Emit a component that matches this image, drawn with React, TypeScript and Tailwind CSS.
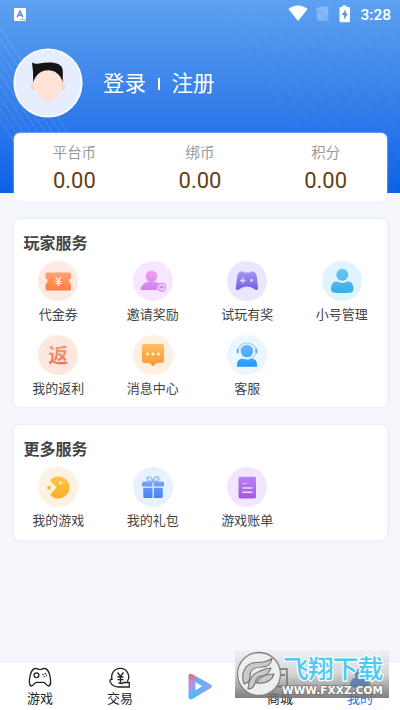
import type { ReactNode } from 'react';

const balances = [
  { label: '平台币', value: '0.00' },
  { label: '绑币', value: '0.00' },
  { label: '积分', value: '0.00' },
];

type Service = { label: string; bg: string; icon: ReactNode };

const playerServices: Service[] = [
  { label: '代金券', bg: 'bg-[#ffe9e4]', icon: <VoucherIcon /> },
  { label: '邀请奖励', bg: 'bg-[#f7e6ff]', icon: <InviteIcon /> },
  { label: '试玩有奖', bg: 'bg-[#e9e7fd]', icon: <GamepadIcon /> },
  { label: '小号管理', bg: 'bg-[#e0f4ff]', icon: <UserIcon /> },
  { label: '我的返利', bg: 'bg-[#fde8e1]', icon: <RebateIcon /> },
  { label: '消息中心', bg: 'bg-[#fdf0e1]', icon: <MessageIcon /> },
  { label: '客服', bg: 'bg-[#ebf7ff]', icon: <SupportIcon /> },
];

const moreServices: Service[] = [
  { label: '我的游戏', bg: 'bg-[#fdf1e3]', icon: <PacmanIcon /> },
  { label: '我的礼包', bg: 'bg-[#e7f2fe]', icon: <GiftIcon /> },
  { label: '游戏账单', bg: 'bg-[#f1e6fe]', icon: <BillIcon /> },
];

export default function App() {
  return (
    <div className="relative flex h-[710px] w-[400px] flex-col overflow-hidden bg-[#f5f7fd] font-['Roboto','Noto_Sans_CJK_SC',sans-serif] text-[#444]">
      <Header />
      <main className="flex flex-1 flex-col px-[13.5px]">
        <Balance />
        <ServiceCard title="玩家服务" items={playerServices} className="mt-[18px] h-[188px]" />
        <ServiceCard title="更多服务" items={moreServices} className="mt-[18px] h-[115px]" />
      </main>
      <TabBar />
      <Watermark />
    </div>
  );
}

/* ================= Header ================= */

function Header() {
  return (
    <header className="relative h-[193px] shrink-0 bg-linear-to-b from-[#5da1f1] via-[#367fea] via-52% to-[#0861e7]">
      <svg className="absolute inset-0" width="400" height="193" stroke="#fff" strokeWidth="1.3" aria-hidden>
        <g opacity="0.09">
          {Array.from({ length: 9 }).map((_, i) => (
            <path key={i} d={`M${-90 + i * 10} ${-20 + i * 4}L${48 + i * 10} ${194 + i * 4}`} />
          ))}
        </g>
        <g opacity="0.025">
          {Array.from({ length: 12 }).map((_, i) => (
            <path key={i} d={`M${215 + i * 14} 0L${345 + i * 14} 200`} />
          ))}
        </g>
      </svg>
      <div className="relative flex h-[28px] items-center justify-between pr-[9px] pl-[14px]">
        <svg width="12" height="13" viewBox="0 0 12 13" aria-hidden>
          <rect width="12" height="13" rx="1.2" fill="#fff" />
          <path d="M3.2 9.3 6 3l2.8 6.3M4.2 7.3h3.6" fill="none" stroke="#4b91ee" strokeWidth="1.5" />
          <path d="M6.5 11.5h4.5" stroke="#4b91ee" strokeDasharray="1 .6" />
        </svg>
        <div className="flex items-center text-white">
          <svg className="-mt-[2px]" width="20" height="17" viewBox="0 0 20 17" fill="#fff" aria-hidden>
            <path d="M.4 4C6-.7 14-.7 19.600 4L10 16z" />
          </svg>
          <svg className="ml-[7px]" width="15" height="16" viewBox="0 0 15 16" aria-hidden>
            <path d="M5 .5h7.2q1 0 1 1v11.2L3 2.5zM1.8 4.6l9.800 10H2.8q-1 0-1-1z" fill="#fff" opacity=".28" />
            <path d="m.5 1.500 13.200 13.600" stroke="#fff" strokeWidth="1.3" opacity=".3" />
          </svg>
          <svg className="-mt-px ml-[9px]" width="12" height="18" viewBox="0 0 12 18" aria-hidden>
            <path d="M3.5.5h4V2H10q1 0 1 1v13.200q0 1-1 1H1.500q-1 0-1-1V3q0-1 1-1h2z" fill="#fff" />
            <path d="M6.7 4.200 2.800 10h2.400v4.400l3.700-6H6.700z" fill="#4b91ee" />
          </svg>
          <span className="mt-px ml-[9px] text-[15.5px] leading-[18px] font-medium">3:28</span>
        </div>
      </div>
      <div className="relative mt-[20px] flex items-center pl-[13px]">
        <Avatar />
        <div className="mt-[2px] ml-[20px] flex items-center text-[21.5px] leading-[30px] text-white">
          <span>登录</span>
          <i className="mr-[12px] ml-[12px] h-[12px] w-[1.5px] bg-white" />
          <span>注册</span>
        </div>
      </div>
    </header>
  );
}

function Avatar() {
  return (
    <svg width="70" height="70" viewBox="0 0 70 70" aria-hidden>
      <circle cx="35" cy="35" r="33.7" fill="#e5edfe" stroke="#fafdff" strokeWidth="1.8" />
      <ellipse cx="20.3" cy="38.3" rx="2.4" ry="4" fill="#f8d5c8" />
      <ellipse cx="49.7" cy="38.3" rx="2.4" ry="4" fill="#f8d5c8" />
      <path d="M20.5 35C20.5 26 27 21.500 35 21.500S49.500 26 49.500 35C49.500 46 40 54.500 35 54.500S20.500 46 20.500 35z" fill="#ffe3d8" />
      <path d="M19 14.500Q22 16.300 26 15.500C36 14 49.800 13 49.800 23.500V34C47 26 42 22.200 35 22.200S23 26 20.200 34.500Q20.500 24 19 14.500z" fill="#151515" />
    </svg>
  );
}

/* ================= Cards ================= */

function Balance() {
  return (
    <section className="relative -mt-[60px] h-[68px] shrink-0 rounded-[6px] bg-white shadow-[0_0_2px_#e2e8fa]">
      <div className="-mx-[2px] grid grid-cols-3 pt-[11px] text-center">
        {balances.map((b) => (
          <div key={b.label}>
            <div className="text-[14.4px] leading-[20px] text-[#999]">{b.label}</div>
            <div className="mt-[4px] text-[22px] leading-[26px] text-[#644015]">{b.value}</div>
          </div>
        ))}
      </div>
    </section>
  );
}

function ServiceCard({ title, items, className }: { title: string; items: Service[]; className: string }) {
  return (
    <section className={`shrink-0 rounded-[6px] bg-white shadow-[0_0_4px_#e0e6f9] ${className}`}>
      <h2 className="pt-[13px] pl-[10px] text-[16px] leading-[24px] font-bold text-[#444]">{title}</h2>
      <div className="-mx-[2.5px] mt-[5px] grid grid-cols-4 gap-y-[12px]">
        {items.map((s) => (
          <div key={s.label} className="flex flex-col items-center">
            <div className={`flex size-[40px] items-center justify-center rounded-full ${s.bg}`}>{s.icon}</div>
            <span className="mt-[5px] -mb-px text-[13px] leading-[18px]">{s.label}</span>
          </div>
        ))}
      </div>
    </section>
  );
}

/* ================= Service icons ================= */

function Icon({ id, from, to, children }: { id: string; from: string; to: string; children: ReactNode }) {
  return (
    <svg width="40" height="40" viewBox="0 0 40 40" fill={`url(#${id})`} aria-hidden>
      <defs>
        <linearGradient id={id} x1="0" y1="9" x2="0" y2="31" gradientUnits="userSpaceOnUse">
          <stop stopColor={from} />
          <stop offset="1" stopColor={to} />
        </linearGradient>
      </defs>
      {children}
    </svg>
  );
}

function VoucherIcon() {
  return (
    <Icon id="voucher" from="#ffaa78" to="#ff7846">
      <path d="M9 11.500h22.500q1.500 0 1.500 1.500v4a3.200 3.200 0 0 0 0 6v5q0 1.500-1.500 1.500H9q-1.500 0-1.500-1.500v-5a3.200 3.200 0 0 0 0-6v-4q0-1.500 1.500-1.500z" />
      <path d="m17.500 16 2.800 3.500 2.800-3.500m-2.800 3.500V25m-3-4.500h6m-6 2h6" fill="none" stroke="#fff" strokeWidth="1.1" />
    </Icon>
  );
}

function InviteIcon() {
  return (
    <Icon id="invite" from="#f6a0ed" to="#c480f5">
      <circle cx="18.5" cy="15.3" r="5.8" />
      <path d="M7.500 29Q9 21 16 21h6q3 0 4.500 1.500A5 5 0 0 0 24 29z" />
      <circle cx="28.6" cy="26.3" r="3.9" fill="#f7e6ff" stroke="#c887ef" strokeWidth="1.2" />
      <path d="M28.600 24v4.600m-2.300-2.300h4.600" stroke="#c887ef" strokeWidth="1.4" />
    </Icon>
  );
}

function GamepadIcon() {
  return (
    <Icon id="pad" from="#a99af8" to="#6f55e3">
      <path d="M14 10.500q1.800-.6 3 1h6q1.200-1.600 3-1 3 .5 3.800 5L31 26.800c.3 2-1.600 2.800-3 1.700Q24.500 25.500 20 25.500t-8 3C10.600 29.600 8.500 28.800 8.800 26.800l1.400-11.300q.8-4.500 3.800-5z" />
      <path d="M15.800 16.700v5.600M13 19.500h5.600" stroke="#ddd5ff" strokeWidth="1.5" />
      <circle cx="24.5" cy="19.3" r="1.5" fill="#ddd5ff" />
    </Icon>
  );
}

function UserIcon() {
  return (
    <Icon id="user" from="#67c5f2" to="#3badeb">
      <circle cx="20.3" cy="13.8" r="6" />
      <path d="M9 28c0-5 2.500-7.500 5.500-7.500q1.500 0 2.500.8 3.300 1.600 6.600 0 1-.8 2.500-.8c3 0 5.400 2.500 5.400 7.500 0 2.500-1.500 3.500-4 3.700q-7.500.8-15 0C10 31.500 9 30 9 28z" />
    </Icon>
  );
}

function RebateIcon() {
  return (
    <span className="mt-[2px] bg-linear-to-b from-[#fa9e7c] to-[#f36d40] bg-clip-text text-[20px] leading-[26px] font-bold text-transparent">
      返
    </span>
  );
}

function MessageIcon() {
  return (
    <Icon id="message" from="#fcbf64" to="#fa9831">
      <path d="M11.500 9h17Q31 9 31 11.500v14Q31 28 28.500 28H24l-4 3.300L16 28h-4.500Q9 28 9 25.500v-14Q9 9 11.500 9z" />
      <g fill="#fff2dd">
        <circle cx="14.5" cy="19" r="1.5" />
        <circle cx="20" cy="19" r="1.5" />
        <circle cx="25.5" cy="19" r="1.5" />
      </g>
    </Icon>
  );
}

function SupportIcon() {
  return (
    <Icon id="support" from="#72b9fc" to="#2598fa">
      <path d="M11 15.500a9 7.500 0 0 1 18 0" fill="none" stroke="#9ccefa" strokeWidth="1.1" />
      <circle cx="20" cy="16" r="6.3" />
      <rect x="9.700" y="13.500" width="2" height="5" rx="1" />
      <rect x="28.300" y="13.500" width="2" height="5" rx="1" />
      <path d="M29 18.500q-1.500 4-6 5" fill="none" stroke="#7cbefc" strokeWidth="0.8" />
      <path d="M10 31.700v-1.500q0-6 5-6.700 5 2.200 10 0 5 .7 5 6.700v1.500z" />
    </Icon>
  );
}

function PacmanIcon() {
  return (
    <Icon id="pacman" from="#fbc646" to="#fdaf28">
      <path d="M12 13.500a11 11 0 1 1 .2 14.200L18.500 20.500z" />
      <circle cx="11" cy="20.800" r="2" />
      <circle cx="22.500" cy="15.800" r="1.600" fill="#fff0c9" />
    </Icon>
  );
}

function GiftIcon() {
  return (
    <Icon id="gift" from="#84b2fb" to="#4a7ff2">
      <path d="M19.500 15C13.500 14 13 10.500 15.500 10s4 2.500 4.500 5c.5-2.500 2-5.500 4.500-5s2 4-4 5" fill="none" stroke="#8bb5f8" strokeWidth="1.3" />
      <path d="M10.500 14.500h9v5H9v-3.500q0-1.500 1.500-1.500zm10.300 0h8.700q1.500 0 1.500 1.500v3.500H20.800zM10.300 20.700h9.200V31h-7.700q-1.500 0-1.500-1.500zm10.500 0h9v8.800q0 1.500-1.500 1.500h-7.500z" />
    </Icon>
  );
}

function BillIcon() {
  return (
    <Icon id="bill" from="#b884f1" to="#a25ae0">
      <rect x="11.500" y="9.800" width="17.500" height="21.700" rx="1.800" />
      <path d="M15.500 16.500h4" stroke="#dac0f8" strokeWidth="1.200" />
      <path d="M15.500 21h10m-10 4.300h10" stroke="#eedfff" strokeWidth="1.500" />
    </Icon>
  );
}

/* ================= Bottom tabs ================= */

function TabBar() {
  return (
    <nav className="grid h-[49px] shrink-0 grid-cols-5 border-t border-[#ececf0] bg-white text-center text-[13px] leading-[18px] text-[#222]">
      <Tab label="游戏">
        <svg width="24" height="22" viewBox="0 0 24 22" fill="none" stroke="#222" strokeWidth="1.3" aria-hidden>
          <path d="M7 1.500q2.200-.5 3 .8h4q.8-1.300 3-.8c3 .8 4.500 3.500 5.300 9.500.6 5 .7 7.500-1.500 8-2.300.4-3.100-3.700-5.300-3.700h-7c-2.200 0-3.100 4.100-5.300 3.700C1 18.500 1.100 15 1.700 11 2.500 5 4 2.300 7 1.500z" />
          <circle cx="8.5" cy="8.200" r="2.400" />
          <path d="M14.300 7.500h1.300m1.700-1.500v1.300m-1 1.700v1.200m1.500-1.700h1" />
        </svg>
      </Tab>
      <Tab label="交易">
        <svg width="22" height="22" viewBox="0 0 22 22" fill="none" stroke="#222" strokeWidth="1.3" aria-hidden>
          <path d="M3.300 13A8.500 8.500 0 1 1 18.300 14.500M3.300 12.200c-2 0-2.800 1-2 3C3 18.500 7 20 10 20h10.300v-4.500h-6c-1 1.300-3 1.300-4.800 0" />
          <path d="m8.500 5.500 3 3.700 3-3.700m-3 3.700V16m-3-6h6m-6 2.600h6" />
        </svg>
      </Tab>
      <div className="flex justify-center pt-[10px]">
        <svg width="26" height="28" viewBox="0 0 26 28" aria-hidden>
          <defs>
            <linearGradient id="play" x1="3" y1="1" x2="9" y2="26" gradientUnits="userSpaceOnUse">
              <stop offset=".1" stopColor="#e77078" />
              <stop offset=".35" stopColor="#a795de" />
              <stop offset=".55" stopColor="#c58bea" />
              <stop offset=".8" stopColor="#59b5f7" />
            </linearGradient>
            <linearGradient id="play-tip" x1="7" y1="8" x2="24" y2="14" gradientUnits="userSpaceOnUse">
              <stop stopColor="#53b9f8" stopOpacity="0" />
              <stop offset=".3" stopColor="#53b9f8" />
              <stop offset="1" stopColor="#9c9df2" />
            </linearGradient>
          </defs>
          <path d="M1.500 4q0-3.200 3.300-2L23.500 12.500q2.500 1.800 0 3.600L5 27q-3.500 1.200-3.500-2z" fill="url(#play)" />
          <path d="M1.500 4q0-3.200 3.300-2L23.500 12.500q2.500 1.800 0 3.600L5 27q-3.500 1.200-3.500-2z" fill="url(#play-tip)" />
          <path d="m8.500 10 6.500 4.300-6.500 4.300z" fill="#fff" />
        </svg>
      </div>
      <Tab label="商城">
        <svg width="24" height="22" viewBox="0 0 24 22" fill="none" stroke="#222" strokeWidth="1.3" aria-hidden>
          <path d="M12 2h7v17.500H5M11 8h6" />
        </svg>
      </Tab>
      <Tab label="我的" active>
        <svg width="24" height="22" viewBox="0 0 24 22" fill="#1573df" aria-hidden>
          <circle cx="12" cy="6.500" r="5.500" />
          <path d="M1.500 20.500Q2 9.500 12 9.500t10.500 11z" />
        </svg>
      </Tab>
    </nav>
  );
}

function Tab({ label, active, children }: { label: string; active?: boolean; children: ReactNode }) {
  return (
    <div className={`flex flex-col items-center pt-[5px] ${active ? 'text-[#2378e4]' : ''}`}>
      {children}
      <span className="mt-px">{label}</span>
    </div>
  );
}

/* ================= Site watermark ================= */

function Watermark() {
  return (
    <div className="absolute top-[650px] left-[235px] flex h-[48px] w-[154px] bg-linear-to-b from-[#eeeeee]/60 via-[#aaaaaa]/50 to-[#707070]/90">
      <svg className="mt-px ml-px shrink-0" width="46" height="46" viewBox="0 0 46 46" aria-hidden>
        <circle cx="23" cy="23" r="21.5" fill="#eeeeee" stroke="#828282" strokeWidth="1.3" />
        <g fill="#c9c9c9" stroke="#747474" strokeWidth="1.1" strokeLinejoin="round">
          <path d="M8 33C4 21 10 12 20 11.500c7-.3 10-.5 16-4-1 7-5 8.500-10 8.500-9 0-12 3-12 9 0 4-2 7-6 8z" />
          <path d="M12 38c1-10 4-15 12-18 4-2 8-3 11-3-3 7-6 8-10 8-4 1-5 3-6 7-1 4-4 6-7 6z" />
          <path d="M20 32c3-6 9-9 18-9-2 7-7 10-18 9z" />
        </g>
      </svg>
      <div className="min-w-0 whitespace-nowrap">
        <div className="mt-[4px] pl-px text-[25.5px] leading-[30px] font-medium tracking-[-0.6px] text-[#4fc9f0] [-webkit-text-stroke:2.5px_#f4fcff] [paint-order:stroke_fill]">
          飞翔下载
        </div>
        <div className="w-[105px] font-['DejaVu_Sans'] text-[10.5px] leading-[12px] font-bold tracking-[0.1px] text-white [-webkit-text-stroke:1.5px_#777777] [paint-order:stroke_fill]">
          WWW.FXXZ.COM
        </div>
      </div>
    </div>
  );
}
